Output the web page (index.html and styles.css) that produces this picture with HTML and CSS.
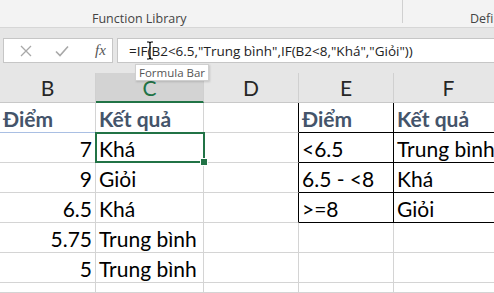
FILE: index.html
```html
<!DOCTYPE html>
<html lang="vi">
<head>
  <meta charset="UTF-8">
  <title>Excel - IF</title>
  <link rel="stylesheet" href="styles.css">
</head>
<body>

  <!-- Ribbon -->
  <div class="ribbon">
    <div class="group g1"><span class="label">Function Library</span></div>
    <div class="group g2"><span class="label">Defined Names</span></div>
  </div>

  <!-- Formula bar -->
  <div class="fbar">
    <div class="fbtns">
      <svg class="ico" width="12" height="12" viewBox="0 0 12 12"><path d="M1 1L11 11M11 1L1 11" stroke="#a8a8a8" stroke-width="1.3" fill="none"/></svg>
      <svg class="ico" width="14" height="12" viewBox="0 0 14 12"><path d="M1 6.5L5 10.5L13 1.5" stroke="#a8a8a8" stroke-width="1.6" fill="none"/></svg>
      <span class="fx">fx</span>
    </div>
    <div class="finput">
      <span class="ftext">=IF(B2&lt;6.5,"Trung bình",IF(B2&lt;8,"Khá","Giỏi"))</span>
      <svg class="ibeam" width="8" height="19" viewBox="0 0 8 19"><path d="M1 1H3L4 2L5 1H7M4 2V17M1 18H3L4 17L5 18H7" stroke="#000" stroke-width="1.2" fill="none"/></svg>
      <span class="tip">Formula Bar</span>
    </div>
  </div>

  <!-- Sheet -->
  <div class="sheet">
    <div class="hd">B</div>
    <div class="hd active">C</div>
    <div class="hd">D</div>
    <div class="hd">E</div>
    <div class="hd">F</div>

    <div class="c title num-col blue-line">Điểm</div>
    <div class="c title">Kết quả</div>
    <div class="c bk-r"></div>
    <div class="c title bk-r bk-b">Điểm</div>
    <div class="c title bk-r bk-b">Kết quả</div>

    <div class="c num">7</div>
    <div class="c sel">Khá</div>
    <div class="c bk-r"></div>
    <div class="c bk-r bk-b">&lt;6.5</div>
    <div class="c bk-r bk-b">Trung bình</div>

    <div class="c num">9</div>
    <div class="c">Giỏi</div>
    <div class="c bk-r"></div>
    <div class="c bk-r bk-b">6.5 - &lt;8</div>
    <div class="c bk-r bk-b">Khá</div>

    <div class="c num">6.5</div>
    <div class="c">Khá</div>
    <div class="c bk-r"></div>
    <div class="c bk-r bk-b">&gt;=8</div>
    <div class="c bk-r bk-b">Giỏi</div>

    <div class="c num">5.75</div>
    <div class="c">Trung bình</div>
    <div class="c"></div>
    <div class="c"></div>
    <div class="c"></div>

    <div class="c num">5</div>
    <div class="c">Trung bình</div>
    <div class="c"></div>
    <div class="c"></div>
    <div class="c"></div>

    <div class="c"></div>
    <div class="c"></div>
    <div class="c"></div>
    <div class="c"></div>
    <div class="c"></div>
  </div>

</body>
</html>
```

FILE: styles.css
```css
body {
  margin: 0;
  width: 494px;
  height: 293px;
  overflow: hidden;
  background: #e6e6e6;
  font-family: "Open Sans", "Noto Sans", sans-serif;
}

/* ribbon */
.ribbon {
  height: 27px;
  background: #f3f3f3;
  border-bottom: 1px solid #d6d6d6;
  display: flex;
  align-items: flex-start;
}
.group {
  box-sizing: border-box;
  white-space: nowrap;
  overflow: hidden;
  padding-top: 11px;
  height: 27px;
}
.g1 {
  width: 403px;
  padding-left: 92px;
  height: 23px;
  border-right: 1px solid #d0d0d0;
  overflow: visible;
}
.g2 {
  flex: 1;
  padding-left: 67px;
}
.label {
  display: block;
  font-size: 12.5px;
  line-height: 15px;
  color: #444;
}

/* formula bar */
.fbar {
  display: flex;
  gap: 4px;
  padding: 10px 0 0 3px;
  height: 45px;
  box-sizing: border-box;
}
.fbtns, .finput {
  height: 25px;
  background: #fff;
  border: 1px solid #c6c6c6;
  box-sizing: border-box;
  display: flex;
  align-items: center;
}
.fbtns {
  width: 110px;
  padding-left: 16px;
  gap: 23px;
}
.fx {
  font-family: "Liberation Serif", serif;
  font-style: italic;
  font-size: 15px;
  color: #555;
  margin-left: 3px;
}
.finput {
  flex: 1;
  padding-left: 11px;
  position: relative;
  border-right: none;
}
.ftext {
  font-size: 13.5px;
  color: #222;
  white-space: nowrap;
}
.ibeam {
  position: absolute;
  left: 28px;
  top: 2px;
}
.tip {
  position: absolute;
  left: 17px;
  top: 25px;
  background: #fff;
  border: 1px solid #cfcfcf;
  box-shadow: 1px 1px 2px rgba(0,0,0,0.15);
  font-size: 11.5px;
  color: #555;
  padding: 0 3px;
  line-height: 15px;
  white-space: nowrap;
  z-index: 2;
}

/* sheet */
.sheet {
  display: grid;
  grid-template-columns: 96px 108px 95px 95px 110px;
  grid-template-rows: repeat(7, 30px) 10px;
  font-family: "Lato", "Liberation Sans", sans-serif;
  background: #fff;
  height: 220px;
  overflow: hidden;
}
.hd {
  background: #e6e6e6;
  border-right: 1px solid #d0d0d0;
  border-bottom: 1px solid #c8c8c8;
  text-align: center;
  font-size: 21px;
  line-height: 29px;
  color: #262626;
}
.hd.active {
  background: #d3d3d3;
  color: #217346;
  border-bottom: 2px solid #217346;
}
.c {
  border-right: 1px solid #d4d4d4;
  border-bottom: 1px solid #d4d4d4;
  font-size: 21px;
  padding: 0 3px;
  display: flex;
  align-items: flex-end;
  line-height: 26px;
  white-space: nowrap;
  color: #000;
}
.hd, .c { box-sizing: border-box; }
.num { justify-content: flex-end; }
.title {
  font-weight: bold;
  color: #44546a;
}
.blue-line { border-bottom-color: #a9bfe3; }
.bk-r { border-right-color: #000; }
.bk-b { border-bottom-color: #000; }
.sel { position: relative; }
.sel::after {
  content: "";
  position: absolute;
  left: -1px;
  top: -1px;
  right: -2px;
  bottom: -1px;
  border: 2px solid #217346;
}
.sel::before {
  content: "";
  position: absolute;
  right: -5px;
  bottom: -4px;
  width: 6px;
  height: 6px;
  background: #217346;
  border: 1px solid #fff;
  z-index: 1;
}
```
